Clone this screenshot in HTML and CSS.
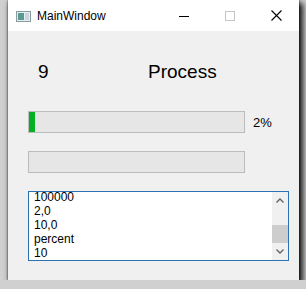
FILE: index.html
```html
<!DOCTYPE html>
<html lang="en">

<head>
    <meta charset="UTF-8">
    <meta name="viewport" content="width=device-width, initial-scale=1.0">
    <title>MainWindow</title>
    <link rel="stylesheet" href="styles.css">
</head>

<body>
    <div class="window">
        <!-- Title bar -->
        <div class="titlebar">
            <svg class="app-icon" width="15" height="11" viewBox="0 0 15 11">
                <rect x="0.5" y="0.5" width="14" height="10" fill="#e8eef0" stroke="#8a9aa0" />
                <rect x="2" y="2" width="6" height="7" fill="#5a9a92" />
                <rect x="9" y="2" width="4" height="7" fill="#c9d6da" />
            </svg>
            <span class="title">MainWindow</span>
            <div class="controls">
                <div class="ctrl">
                    <svg width="10" height="10" viewBox="0 0 10 10"><line x1="0" y1="5.5" x2="10" y2="5.5" stroke="#000" /></svg>
                </div>
                <div class="ctrl">
                    <svg width="10" height="10" viewBox="0 0 10 10"><rect x="0.5" y="0.5" width="9" height="9" fill="none" stroke="#c4c4c4" /></svg>
                </div>
                <div class="ctrl">
                    <svg width="11" height="11" viewBox="0 0 11 11"><path d="M0.5 0.5 L10.5 10.5 M10.5 0.5 L0.5 10.5" stroke="#000" stroke-width="1.1" /></svg>
                </div>
            </div>
        </div>

        <!-- Window content -->
        <div class="content">
            <div class="labels">
                <span class="count">9</span>
                <span class="caption">Process</span>
            </div>

            <div class="progress-row">
                <div class="bar"><div class="chunk" style="width: 6px"></div></div>
                <span class="percent">2%</span>
            </div>

            <div class="bar second"></div>

            <div class="listbox">
                <div class="lines">
                    <div>100000</div>
                    <div>2,0</div>
                    <div>10,0</div>
                    <div>percent</div>
                    <div>10</div>
                </div>
                <div class="scrollbar">
                    <div class="arrow">
                        <svg width="8" height="5" viewBox="0 0 8 5"><polyline points="0.5,4.5 4,1 7.5,4.5" fill="none" stroke="#606060" stroke-width="1.3" /></svg>
                    </div>
                    <div class="track"><div class="thumb"></div></div>
                    <div class="arrow">
                        <svg width="8" height="5" viewBox="0 0 8 5"><polyline points="0.5,0.5 4,4 7.5,0.5" fill="none" stroke="#606060" stroke-width="1.3" /></svg>
                    </div>
                </div>
            </div>
        </div>
    </div>
</body>

</html>
```

FILE: styles.css
```css
/* Desktop behind the window */
body {
    margin: 0;
    background-color: #d0d0d0;
    font-family: 'Liberation Sans', Arial, sans-serif;
    overflow: hidden;
}

/* The window frame */
.window {
    margin-left: 8px;
    width: 291px;
    height: 280px;
    background-color: #f0f0f0;
    box-shadow: 3px 4px 6px 1px rgba(0, 0, 0, 0.9), 0 0 2px rgba(0, 0, 0, 0.7);
    display: flex;
    flex-direction: column;
}

/* Title bar */
.titlebar {
    height: 31px;
    background-color: white;
    display: flex;
    align-items: center;
}

.app-icon {
    margin-left: 8px;
    margin-top: 1px;
}

.title {
    margin-left: 6px;
    font-size: 12px;
    color: #000;
}

.controls {
    margin-left: auto;
    display: flex;
    height: 100%;
}

.ctrl {
    width: 46px;
    display: flex;
    align-items: center;
    justify-content: center;
}

/* Content area */
.content {
    padding: 30px 10px 0 20px;
    display: flex;
    flex-direction: column;
}

.labels {
    display: grid;
    grid-template-columns: 110px auto;
    padding-left: 10px;
    font-size: 19px;
    line-height: 22px;
    color: #000;
}

.progress-row {
    margin-top: 28px;
    display: flex;
    align-items: center;
}

.bar {
    width: 215px;
    height: 20px;
    border: 1px solid #bcbcbc;
    background-color: #e6e6e6;
    display: flex;
}

.chunk {
    background-color: #06b025;
}

.bar.second {
    margin-top: 18px;
}

.percent {
    margin-left: 8px;
    font-size: 13px;
    color: #000;
}

/* The text list */
.listbox {
    margin-top: 18px;
    width: 259px;
    height: 68px;
    border: 1px solid #2b72b2;
    background-color: white;
    display: flex;
    overflow: hidden;
}

.lines {
    flex: 1;
    margin-top: -2px;
    padding-left: 5px;
    font-size: 12px;
    line-height: 14px;
    color: #000;
}

.scrollbar {
    width: 16px;
    background-color: #f0f0f0;
    display: flex;
    flex-direction: column;
}

.arrow {
    height: 17px;
    display: flex;
    align-items: center;
    justify-content: center;
}

.track {
    flex: 1;
    display: flex;
    flex-direction: column;
    justify-content: flex-end;
}

.thumb {
    height: 18px;
    background-color: #cdcdcd;
}
```
